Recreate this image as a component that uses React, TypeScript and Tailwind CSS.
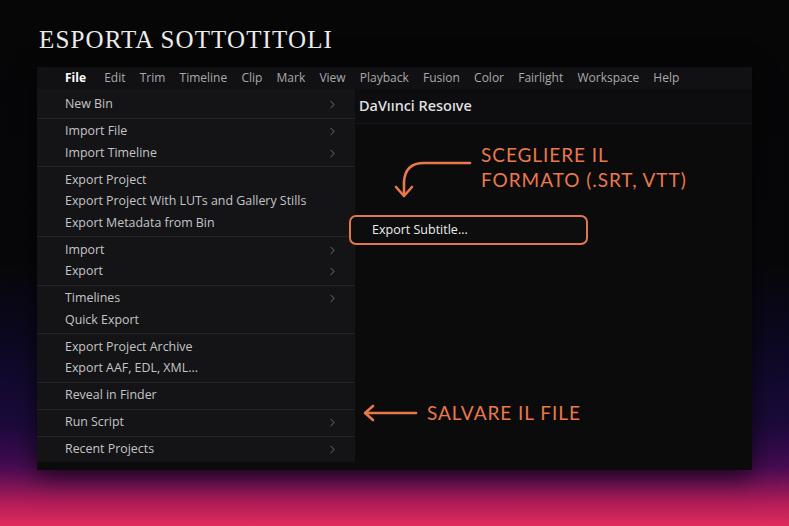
import React from 'react';
import { ChevronRight } from 'lucide-react';

const menuBar = ['File', 'Edit', 'Trim', 'Timeline', 'Clip', 'Mark', 'View', 'Playback', 'Fusion', 'Color', 'Fairlight', 'Workspace', 'Help'];

type Item = { label: string; sub?: boolean };

const groups: Item[][] = [
  [{ label: 'New Bin', sub: true }],
  [
    { label: 'Import File', sub: true },
    { label: 'Import Timeline', sub: true },
  ],
  [
    { label: 'Export Project' },
    { label: 'Export Project With LUTs and Gallery Stills' },
    { label: 'Export Metadata from Bin' },
  ],
  [
    { label: 'Import', sub: true },
    { label: 'Export', sub: true },
  ],
  [
    { label: 'Timelines', sub: true },
    { label: 'Quick Export' },
  ],
  [
    { label: 'Export Project Archive' },
    { label: 'Export AAF, EDL, XML...' },
  ],
  [{ label: 'Reveal in Finder' }],
  [{ label: 'Run Script', sub: true }],
  [{ label: 'Recent Projects', sub: true }],
];

const App: React.FC = () => {
  return (
    <div className="relative w-[789px] h-[526px] overflow-hidden bg-[linear-gradient(to_bottom,#060607_0%,#07070a_50%,#0c0820_64%,#130a30_73%,#1d0a3c_81%,#340b4a_86%,#4a0c52_89%,#761356_92%,#b01c57_95.5%,#e02c5c_100%)] font-['Open_Sans',sans-serif]">
      {/* Title */}
      <h1 className="pl-[39px] pt-[26px] h-[67px] text-[25px] leading-[28px] tracking-[0.045em] text-[#ececec] font-['Liberation_Serif',serif]">
        ESPORTA SOTTOTITOLI
      </h1>

      {/* Resolve window */}
      <div className="relative ml-[37px] w-[715px] h-[403px] bg-[#0b0b0c] shadow-[0_6px_24px_rgba(0,0,0,0.7)] flex flex-col">
        {/* Menu bar */}
        <div className="h-[22px] bg-[#111113] flex items-center pl-[28px] gap-[14.2px] text-[12px] text-[#a9a9ab]">
          {menuBar.map((m) => (
            <span key={m} className={m === 'File' ? 'font-bold text-white mr-[4px]' : ''}>
              {m}
            </span>
          ))}
        </div>

        <div className="flex flex-1">
          {/* Dropdown */}
          <div className="w-[318px] h-[373px] bg-[#141416] pt-[2.5px] text-[12.4px] text-[#c4c4c6]">
            {groups.map((g, gi) => (
              <div key={gi} className={gi === 0 ? 'py-[2.25px]' : 'py-[2.25px] border-t border-[#242427]'}>
                {g.map((it) => (
                  <div key={it.label} className="h-[21.5px] flex items-center justify-between pl-[28px] pr-[16px]">
                    <span>{it.label}</span>
                    {it.sub && <ChevronRight size={13} strokeWidth={1.4} className="text-[#8c8c8e]" />}
                  </div>
                ))}
              </div>
            ))}
          </div>

          {/* Right pane */}
          <div className="flex-1">
            <div className="h-[35px] flex items-center pl-[4px] border-b border-[#151517] bg-[#0d0d0f] text-[14.5px] font-medium text-[#e4e4e6] font-['Noto_Sans',sans-serif]">
              DaVıınci Resoıve
            </div>
          </div>
        </div>

        {/* Highlighted submenu item */}
        <div className="absolute left-[312px] top-[148px] w-[239px] h-[30px] rounded-[7px] border-2 border-[#e2774b] bg-[#0d0d0e] flex items-center pl-[21px] text-[12.5px] text-[#ececec]">
          Export Subtitle...
        </div>
      </div>

      {/* Annotations */}
      <div className="absolute left-[481px] top-[142px] text-[19px] leading-[25px] tracking-[0.05em] text-[#e9784c] font-['Lato',sans-serif]">
        <div>SCEGLIERE IL</div>
        <div>FORMATO (.SRT, VTT)</div>
      </div>
      <div className="absolute left-[427px] top-[401px] text-[19px] leading-[24px] tracking-[0.05em] text-[#e9784c] font-['Lato',sans-serif]">
        SALVARE IL FILE
      </div>

      <svg className="absolute left-0 top-0" width="789" height="526" fill="none" stroke="#e9784c" strokeWidth="2.6" strokeLinecap="round" strokeLinejoin="round">
        <path d="M470 163 H424 Q405 163 404 182 V195" />
        <path d="M396 187 L404 196 L412 187" />
        <path d="M416 413 H366" />
        <path d="M373 406 L365 413 L373 420" />
      </svg>
    </div>
  );
};

export default App;
